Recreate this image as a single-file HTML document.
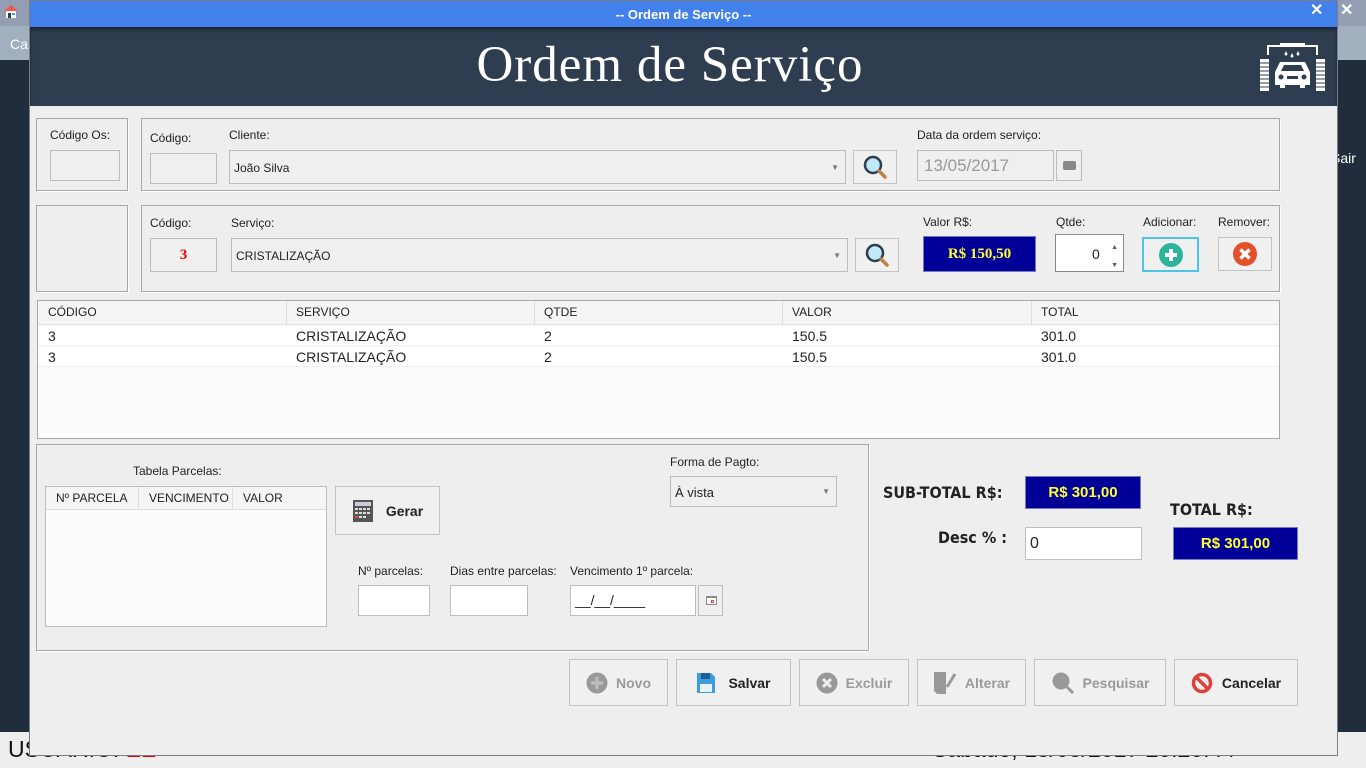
<!DOCTYPE html>
<html><head><meta charset="utf-8"><style>
*{box-sizing:border-box;margin:0;padding:0}
body{width:1366px;height:768px;position:relative;overflow:hidden;background:#1f2d3d;font-family:"Liberation Sans",sans-serif;font-size:12px;color:#222}
.a{position:absolute}
.box{position:absolute;border:1px solid #a8a8a8;box-shadow:1px 1px 0 #fff}
.fld{position:absolute;border:1px solid #bdbdbd;background:#efefef}
.wf{position:absolute;border:1px solid #bdbdbd;background:#fff}
.lbl{position:absolute;font-size:12px;color:#222}
.btn{position:absolute;border:1px solid #c4c4c4;background:#f0f0f0;display:flex;align-items:center;justify-content:center;font-weight:bold;font-size:14px}
.dis{color:#9a9a9a}
.blue{position:absolute;background:#000099;border:1px solid #7a7ac0;color:#ffff33;font-weight:bold;font-family:"Liberation Serif",serif;font-size:15px;display:flex;align-items:center;justify-content:center}
</style></head><body>
<div class="a" style="left:0;top:0;width:1366px;height:26px;background:#939eb2"></div>
<div class="a" style="left:0;top:26px;width:1366px;height:34px;background:#a0b0be"></div>
<div class="a" style="left:3px;top:3px;width:16px;height:16px"><svg width="16" height="16"><path d="M1 8 L8 2 L15 8Z" fill="#f05a4a"/><rect x="3" y="8" width="10" height="7" fill="#fff"/><rect x="5" y="10" width="3" height="5" fill="#2e3d50"/><rect x="9" y="10" width="3" height="2" fill="#4ac"/></svg></div>
<div class="a" style="left:10px;top:36px;color:#fff;font-size:14px">Ca</div>
<div class="a" style="left:1340px;top:0;color:#fff;font-size:16px;font-weight:bold">✕</div>
<div class="a" style="left:1331px;top:150px;color:#fff;font-size:14px">Sair</div>
<div class="a" style="left:0;top:732px;width:1366px;height:36px;background:#eeeeee"></div>
<div class="a" style="left:8px;top:736px;font-size:23px;color:#111">USUÁRIO: <span style="color:#e00">EE</span></div>
<div class="a" style="left:932px;top:736px;font-size:23px;color:#111">Sábado, 13/05/2017 20:20:44</div>

<div class="a" style="left:29px;top:0;width:1309px;height:756px;background:#eeeeee;border:1px solid #7d7d7d"></div>
<div class="a" style="left:30px;top:1px;width:1307px;height:26px;background:#4280ec;color:#fff;font-weight:bold;font-size:13px;text-align:center;line-height:28px">-- Ordem de Serviço --</div>
<div class="a" style="left:1310px;top:0;color:#fff;font-size:16px;font-weight:bold">✕</div>
<div class="a" style="left:30px;top:27px;width:1307px;height:79px;background:#2e3d50;box-shadow:inset 0 3px 3px #1b2533"></div>
<div class="a" style="left:30px;top:36px;width:1280px;text-align:center;color:#fff;font-family:'Liberation Serif',serif;font-size:51px;letter-spacing:1px">Ordem de Serviço</div>
<svg class="a" style="left:1259px;top:41px" width="68" height="50" viewBox="0 0 68 50">
<path d="M9 14 V5 H58 V14" fill="none" stroke="#fff" stroke-width="2"/>
<rect x="21" y="2" width="25" height="3" fill="#fff"/>
<path d="M27 10 l-1.5 3 a1.5 1.5 0 0 0 3 0z M33 12 l-1.5 3 a1.5 1.5 0 0 0 3 0z M39 10 l-1.5 3 a1.5 1.5 0 0 0 3 0z" fill="#fff"/>
<g fill="#fff"><rect x="1" y="18" width="9" height="32"/><rect x="57" y="18" width="9" height="32"/></g>
<g stroke="#2e3d50" stroke-width="1"><path d="M1 22H10M1 26H10M1 30H10M1 34H10M1 38H10M1 42H10M1 46H10M57 22H66M57 26H66M57 30H66M57 34H66M57 38H66M57 42H66M57 46H66"/></g>
<path d="M16 31 L21 21 H46 L51 31 V44 H46 V47 H41 V44 H26 V47 H21 V44 H16Z" fill="#fff"/>
<path d="M22 30 L25 24 H42 L45 30Z" fill="#2e3d50"/>
<circle cx="22" cy="36" r="2.5" fill="#2e3d50"/><circle cx="45" cy="36" r="2.5" fill="#2e3d50"/>
<rect x="28" y="35" width="11" height="3" fill="#2e3d50"/>
</svg>

<div class="box" style="left:36px;top:118px;width:92px;height:73px"></div>
<div class="lbl" style="left:50px;top:128px">Código Os:</div>
<div class="fld" style="left:50px;top:150px;width:70px;height:31px"></div>
<div class="box" style="left:141px;top:118px;width:1139px;height:73px"></div>
<div class="lbl" style="left:150px;top:131px">Código:</div>
<div class="fld" style="left:150px;top:153px;width:67px;height:31px"></div>
<div class="lbl" style="left:229px;top:128px">Cliente:</div>
<div class="fld" style="left:229px;top:150px;width:617px;height:34px;font-size:12px;padding:10px 4px">João Silva<span style="position:absolute;right:6px;top:12px;font-size:8px;color:#777">▼</span></div>
<div class="btn" style="left:853px;top:150px;width:44px;height:34px"><svg width="26" height="26"><circle cx="11" cy="11" r="8" fill="#bfe8f8" stroke="#2e3d50" stroke-width="2.5"/><path d="M17 17 L23 23" stroke="#c08040" stroke-width="3.5" stroke-linecap="round"/></svg></div>
<div class="lbl" style="left:917px;top:128px">Data da ordem serviço:</div>
<div class="fld" style="left:917px;top:150px;width:137px;height:31px;color:#999;font-size:17px;padding:5px 6px">13/05/2017</div>
<div class="fld" style="left:1056px;top:150px;width:26px;height:31px"><div style="position:absolute;left:6px;top:10px;width:13px;height:9px;background:#888;border-radius:2px"></div></div>

<div class="box" style="left:36px;top:205px;width:92px;height:87px"></div>
<div class="box" style="left:141px;top:205px;width:1139px;height:87px"></div>
<div class="lbl" style="left:150px;top:216px">Código:</div>
<div class="fld" style="left:150px;top:238px;width:67px;height:34px;color:#e00;font-weight:bold;font-family:'Liberation Serif',serif;font-size:15px;text-align:center;line-height:32px">3</div>
<div class="lbl" style="left:231px;top:216px">Serviço:</div>
<div class="fld" style="left:231px;top:238px;width:617px;height:34px;padding:10px 4px">CRISTALIZAÇÃO<span style="position:absolute;right:6px;top:12px;font-size:8px;color:#777">▼</span></div>
<div class="btn" style="left:855px;top:238px;width:44px;height:34px"><svg width="26" height="26"><circle cx="11" cy="11" r="8" fill="#bfe8f8" stroke="#2e3d50" stroke-width="2.5"/><path d="M17 17 L23 23" stroke="#c08040" stroke-width="3.5" stroke-linecap="round"/></svg></div>
<div class="lbl" style="left:923px;top:215px">Valor R$:</div>
<div class="blue" style="left:923px;top:236px;width:113px;height:36px">R$ 150,50</div>
<div class="lbl" style="left:1056px;top:215px">Qtde:</div>
<div class="wf" style="left:1055px;top:234px;width:69px;height:38px;border-color:#888;font-size:14px;padding:11px 0 0 36px">0<span style="position:absolute;right:5px;top:4px;font-size:7px;color:#555;line-height:18px">▲<br>▼</span></div>
<div class="lbl" style="left:1143px;top:215px">Adicionar:</div>
<div class="btn" style="left:1142px;top:237px;width:57px;height:35px;border:2px solid #4cc4ec"><svg width="26" height="26"><circle cx="13" cy="13" r="12" fill="#2db39b"/><path d="M13 7V19M7 13H19" stroke="#fff" stroke-width="4"/></svg></div>
<div class="lbl" style="left:1218px;top:215px">Remover:</div>
<div class="btn" style="left:1218px;top:237px;width:54px;height:34px"><svg width="26" height="26"><circle cx="13" cy="13" r="12" fill="#e4502a"/><path d="M8.5 8.5L17.5 17.5M17.5 8.5L8.5 17.5" stroke="#fff" stroke-width="3.5"/></svg></div>

<div class="a" style="left:37px;top:300px;width:1243px;height:139px;background:#fbfbfb;border:1px solid #a8a8a8"></div>
<div class="a" style="left:38px;top:301px;width:1241px;height:24px;background:#f5f5f5;border-bottom:1px solid #ddd"></div>
<div class="a" style="left:286px;top:301px;width:1px;height:24px;background:#ddd"></div>
<div class="a" style="left:534px;top:301px;width:1px;height:24px;background:#ddd"></div>
<div class="a" style="left:782px;top:301px;width:1px;height:24px;background:#ddd"></div>
<div class="a" style="left:1031px;top:301px;width:1px;height:24px;background:#ddd"></div>
<div class="a" style="left:38px;top:326px;width:1241px;height:20px;background:#fff;border-bottom:1px solid #eee"></div>
<div class="a" style="left:38px;top:347px;width:1241px;height:20px;background:#fff;border-bottom:1px solid #eee"></div>
<div class="a" style="top:305px;left:48px;font-size:12px">CÓDIGO</div><div class="a" style="top:305px;left:296px">SERVIÇO</div><div class="a" style="top:305px;left:544px">QTDE</div><div class="a" style="top:305px;left:792px">VALOR</div><div class="a" style="top:305px;left:1041px">TOTAL</div>
<div class="a" style="top:328px;left:48px;font-size:14px">3</div><div class="a" style="top:328px;left:296px;font-size:14px">CRISTALIZAÇÃO</div><div class="a" style="top:328px;left:544px;font-size:14px">2</div><div class="a" style="top:328px;left:792px;font-size:14px">150.5</div><div class="a" style="top:328px;left:1041px;font-size:14px">301.0</div>
<div class="a" style="top:349px;left:48px;font-size:14px">3</div><div class="a" style="top:349px;left:296px;font-size:14px">CRISTALIZAÇÃO</div><div class="a" style="top:349px;left:544px;font-size:14px">2</div><div class="a" style="top:349px;left:792px;font-size:14px">150.5</div><div class="a" style="top:349px;left:1041px;font-size:14px">301.0</div>

<div class="box" style="left:36px;top:444px;width:833px;height:207px"></div>
<div class="lbl" style="left:133px;top:464px">Tabela Parcelas:</div>
<div class="a" style="left:45px;top:486px;width:282px;height:141px;background:#fbfbfb;border:1px solid #bdbdbd"></div>
<div class="a" style="left:46px;top:487px;width:280px;height:23px;background:#f5f5f5;border-bottom:1px solid #ddd"></div>
<div class="a" style="left:138px;top:487px;width:1px;height:23px;background:#ddd"></div>
<div class="a" style="left:232px;top:487px;width:1px;height:23px;background:#ddd"></div>
<div class="a" style="left:56px;top:491px">Nº PARCELA</div><div class="a" style="left:149px;top:491px">VENCIMENTO</div><div class="a" style="left:243px;top:491px">VALOR</div>
<div class="btn" style="left:335px;top:486px;width:105px;height:49px"><svg width="22" height="24" style="margin-right:12px"><rect x="1" y="1" width="20" height="22" fill="#555"/><rect x="3" y="3" width="16" height="4" fill="#ccd"/><g fill="#ddd"><rect x="3" y="9" width="3" height="2"/><rect x="7" y="9" width="3" height="2"/><rect x="11" y="9" width="3" height="2"/><rect x="15" y="9" width="3" height="2"/><rect x="3" y="13" width="3" height="2"/><rect x="7" y="13" width="3" height="2"/><rect x="11" y="13" width="3" height="2"/><rect x="15" y="13" width="3" height="2"/><rect x="7" y="17" width="3" height="2"/><rect x="11" y="17" width="3" height="2"/></g><rect x="3" y="17" width="3" height="2" fill="#e44"/></svg>Gerar</div>
<div class="lbl" style="left:670px;top:455px">Forma de Pagto:</div>
<div class="fld" style="left:670px;top:476px;width:167px;height:31px;font-size:13px;padding:8px 4px">À vista<span style="position:absolute;right:6px;top:10px;font-size:8px;color:#777">▼</span></div>
<div class="lbl" style="left:358px;top:564px">Nº parcelas:</div>
<div class="wf" style="left:358px;top:585px;width:72px;height:31px"></div>
<div class="lbl" style="left:450px;top:564px">Dias entre parcelas:</div>
<div class="wf" style="left:450px;top:585px;width:78px;height:31px"></div>
<div class="lbl" style="left:570px;top:564px">Vencimento 1º parcela:</div>
<div class="wf" style="left:570px;top:585px;width:126px;height:31px;font-size:14px;padding:6px 4px">__/__/____</div>
<div class="fld" style="left:698px;top:585px;width:25px;height:31px"><div style="position:absolute;left:7px;top:10px;width:11px;height:9px;border:1px solid #888;border-top:2px solid #888;background:#fff"><div style="position:absolute;left:4px;top:2px;width:3px;height:3px;border:1px solid #e44"></div></div></div>

<div class="a" style="left:883px;top:483px;font-weight:bold;font-size:16px;font-family:'DejaVu Sans Condensed','Liberation Sans',sans-serif">SUB-TOTAL R$:</div>
<div class="blue" style="left:1025px;top:476px;width:116px;height:33px;font-family:'Liberation Sans',sans-serif;font-size:15px">R$ 301,00</div>
<div class="a" style="left:1170px;top:500px;font-weight:bold;font-size:16px;font-family:'DejaVu Sans Condensed','Liberation Sans',sans-serif">TOTAL R$:</div>
<div class="a" style="left:938px;top:528px;font-weight:bold;font-size:16px;font-family:'DejaVu Sans Condensed','Liberation Sans',sans-serif">Desc % :</div>
<div class="wf" style="left:1025px;top:527px;width:117px;height:33px;font-size:16px;padding:7px 4px">0</div>
<div class="blue" style="left:1173px;top:527px;width:125px;height:33px;font-family:'Liberation Sans',sans-serif;font-size:15px">R$ 301,00</div>

<div class="btn dis" style="left:569px;top:659px;width:99px;height:47px"><svg width="22" height="22" style="margin-right:8px"><circle cx="11" cy="11" r="10.5" fill="#999"/><path d="M11 5V17M5 11H17" stroke="#bbb" stroke-width="3.5"/></svg>Novo</div>
<div class="btn" style="left:676px;top:659px;width:115px;height:47px"><svg width="20" height="22" style="margin-right:12px"><path d="M1 1H15L19 5V21H1Z" fill="#3d9be0"/><rect x="5" y="1" width="9" height="6" fill="#1e5e96"/><rect x="4" y="12" width="12" height="8" fill="#e8f2fa"/></svg>Salvar</div>
<div class="btn dis" style="left:799px;top:659px;width:110px;height:47px"><svg width="22" height="22" style="margin-right:8px"><circle cx="11" cy="11" r="10.5" fill="#999"/><path d="M7 7L15 15M15 7L7 15" stroke="#eee" stroke-width="3"/></svg>Excluir</div>
<div class="btn dis" style="left:917px;top:659px;width:109px;height:47px"><svg width="24" height="24" style="margin-right:8px"><path d="M1 1H13V23H4L1 20Z" fill="#999"/><path d="M14 16L22 3" stroke="#999" stroke-width="3"/></svg>Alterar</div>
<div class="btn dis" style="left:1034px;top:659px;width:132px;height:47px"><svg width="24" height="24" style="margin-right:8px"><circle cx="10" cy="10" r="8.5" fill="#999"/><path d="M16 16L22 22" stroke="#999" stroke-width="3"/></svg>Pesquisar</div>
<div class="btn" style="left:1174px;top:659px;width:124px;height:47px"><svg width="22" height="22" style="margin-right:9px"><circle cx="11" cy="11" r="8.5" fill="none" stroke="#e0403a" stroke-width="3.5"/><path d="M5 5L17 17" stroke="#e0403a" stroke-width="3.5"/></svg>Cancelar</div>
</body></html>
